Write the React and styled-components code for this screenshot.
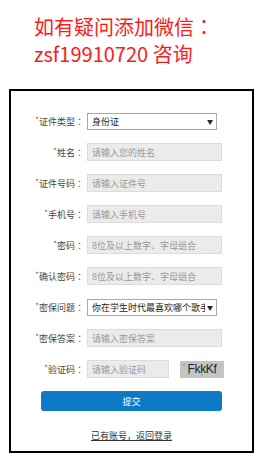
import React from "react";
import styled, { createGlobalStyle } from "styled-components";

const fields = [
  { label: "证件类型", type: "select", value: "身份证" },
  { label: "姓名", placeholder: "请输入您的姓名" },
  { label: "证件号码", placeholder: "请输入证件号" },
  { label: "手机号", placeholder: "请输入手机号" },
  { label: "密码", placeholder: "8位及以上数字、字母组合" },
  { label: "确认密码", placeholder: "8位及以上数字、字母组合" },
  { label: "密保问题", type: "select", value: "你在学生时代最喜欢哪个歌手" },
  { label: "密保答案", placeholder: "请输入密保答案" },
  { label: "验证码", type: "captcha", placeholder: "请输入验证码" },
];

function Register() {
  return (
    <Page>
      <Notice>
        如有疑问添加微信<Colon>：</Colon>
        <br />
        zsf19910720 咨询
      </Notice>
      <Box>
        <Form>
          {fields.map((f) => (
            <Row key={f.label}>
              <Label>
                <Star>*</Star>
                {f.label}
                <Colon>：</Colon>
              </Label>
              {f.type === "select" ? (
                <Select>
                  <SelectText>{f.value}</SelectText>
                  <Arrow>▼</Arrow>
                </Select>
              ) : f.type === "captcha" ? (
                <>
                  <Input short placeholder={f.placeholder} />
                  <Captcha>
                    <span>FkkKf</span>
                    <Noise viewBox="0 0 44 17">
                      <circle cx="4" cy="4" r="0.7" fill="#6a5acd" />
                      <circle cx="9" cy="13" r="0.7" fill="#2e8b57" />
                      <circle cx="16" cy="3" r="0.6" fill="#cd5c5c" />
                      <circle cx="22" cy="14" r="0.7" fill="#4682b4" />
                      <circle cx="29" cy="5" r="0.6" fill="#9acd32" />
                      <circle cx="35" cy="12" r="0.7" fill="#c71585" />
                      <circle cx="40" cy="4" r="0.6" fill="#ff8c00" />
                      <circle cx="13" cy="8" r="0.5" fill="#8a2be2" />
                      <circle cx="38" cy="15" r="0.5" fill="#20b2aa" />
                    </Noise>
                  </Captcha>
                </>
              ) : (
                <Input placeholder={f.placeholder} />
              )}
            </Row>
          ))}
        </Form>
        <Submit>提交</Submit>
        <Back href="#">已有账号，返回登录</Back>
      </Box>
    </Page>
  );
}

const GlobalStyle = createGlobalStyle`
  body {
    margin: 0;
    background: #fff;
    font-family: "Noto Sans CJK SC", "Noto Sans", sans-serif;
  }
`;

const Page = styled.div`
  width: 264px;
  height: 458px;
  overflow: hidden;
`;

const Notice = styled.div`
  padding: 13px 0 0 34px;
  color: #ff1a1a;
  font-size: 20px;
  line-height: 27px;
`;

const Colon = styled.span`
  font-family: "Noto Sans CJK TC", sans-serif;
`;

const Box = styled.div`
  margin: 22px 0 0 9px;
  width: 245px;
  height: 364px;
  box-sizing: border-box;
  border: 2px solid #000;
  display: flex;
  flex-direction: column;
  align-items: center;
  padding-top: 21px;
`;

const Form = styled.div`
  align-self: stretch;
  display: flex;
  flex-direction: column;
  gap: 13px;
`;

const Row = styled.div`
  display: flex;
  align-items: center;
  height: 18px;
`;

const Label = styled.div`
  width: 73px;
  margin-right: 3px;
  text-align: right;
  font-size: 9px;
  color: #444;
  white-space: nowrap;
`;

const Star = styled.span`
  color: #e33;
  font-size: 8px;
  vertical-align: 2px;
`;

const Input = styled.input`
  width: ${(p) => (p.short ? "82px" : "135px")};
  height: 18px;
  box-sizing: border-box;
  border: 1px solid #dcdcdc;
  background: #ebebeb;
  padding: 0 4px;
  font-family: inherit;
  font-size: 9px;
  outline: none;
  &::placeholder {
    color: #999;
  }
`;

const Select = styled.div`
  width: 130px;
  height: 17px;
  box-sizing: border-box;
  border: 1px solid #a9a9a9;
  background: #fff;
  display: flex;
  align-items: center;
  padding: 0 3px 0 4px;
  font-size: 9px;
  color: #222;
`;

const SelectText = styled.span`
  flex: 1;
  min-width: 0;
  overflow: hidden;
  white-space: nowrap;
`;

const Arrow = styled.span`
  font-size: 6px;
  color: #222;
  margin-left: 2px;
`;

const Captcha = styled.div`
  position: relative;
  margin-left: 11px;
  width: 44px;
  height: 17px;
  background: #c4c4c4;
  display: flex;
  align-items: center;
  justify-content: center;
  font-family: "Liberation Sans", sans-serif;
  font-size: 12px;
  color: #222;
  letter-spacing: -0.3px;
  overflow: hidden;
`;

const Noise = styled.svg`
  position: absolute;
  inset: 0;
  width: 100%;
  height: 100%;
`;

const Submit = styled.button`
  margin-top: 13px;
  width: 181px;
  height: 20px;
  border: none;
  border-radius: 3px;
  background: #0a7bc4;
  color: #fff;
  font-family: inherit;
  font-size: 9px;
  padding: 0;
`;

const Back = styled.a`
  margin-top: 18px;
  font-size: 9px;
  color: #333;
  text-decoration: underline;
`;

export default function App() {
  return (
    <>
      <GlobalStyle />
      <Register />
    </>
  );
}
